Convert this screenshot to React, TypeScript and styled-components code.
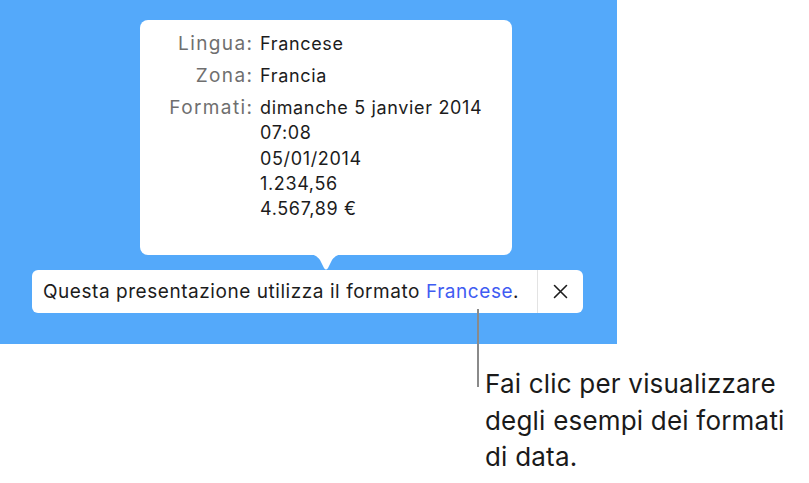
import React from "react";
import styled, { createGlobalStyle } from "styled-components";

const GlobalStyle = createGlobalStyle`
  html, body {
    margin: 0;
    padding: 0;
    background: #ffffff;
  }
  body {
    font-family: Inter, "Noto Sans", "Liberation Sans", sans-serif;
    -webkit-font-smoothing: antialiased;
  }
`;

const Page = styled.div`
  width: 809px;
  height: 483px;
  overflow: hidden;
  position: relative;
`;

const BluePanel = styled.div`
  width: 617px;
  height: 344px;
  box-sizing: border-box;
  background: #54a9fa;
  padding-top: 20px;
  display: flex;
  flex-direction: column;
`;

const Popover = styled.div`
  position: relative;
  margin-left: 140px;
  width: 372px;
  height: 235px;
  box-sizing: border-box;
  background: #ffffff;
  border-radius: 8px;
  padding: 11px 0 0 0;
`;

const Arrow = styled.svg`
  position: absolute;
  left: 166px;
  bottom: -16px;
  display: block;
`;

const InfoGrid = styled.div`
  display: grid;
  grid-template-columns: 112px 1fr;
  column-gap: 8px;
  row-gap: 6.5px;
  font-size: 18px;
  letter-spacing: 0.65px;
  line-height: 25.4px;
`;

const Label = styled.div`
  text-align: right;
  color: #6f6f6f;
  font-size: 19px;
  letter-spacing: 1.4px;
  margin-right: -1.4px;
`;

const Value = styled.div`
  color: #1c1c1c;
  display: flex;
  flex-direction: column;
`;

const Bar = styled.div`
  margin-top: 15px;
  margin-left: 32px;
  width: 551px;
  height: 43px;
  background: #ffffff;
  border-radius: 6px;
  display: flex;
  align-items: stretch;
`;

const Message = styled.div`
  flex: 1;
  display: flex;
  align-items: center;
  padding-left: 11px;
  font-size: 19px;
  letter-spacing: 0.55px;
  color: #1c1c1c;
  white-space: nowrap;
`;

const Link = styled.span`
  color: #3f5cf2;
`;

const Close = styled.div`
  width: 45px;
  border-left: 1px solid #e3e3e3;
  display: flex;
  align-items: center;
  justify-content: center;
  color: #1c1c1c;
`;

const Callout = styled.div`
  position: relative;
  margin-left: 485px;
  margin-top: 22px;
  font-size: 26px;
  letter-spacing: 0.2px;
  line-height: 36.5px;
  color: #1a1a1a;
`;

const Leader = styled.div`
  position: absolute;
  left: -8px;
  top: -57px;
  width: 2px;
  height: 78px;
  background: #8a8a8a;
`;

const formats = [
  "dimanche 5 janvier 2014",
  "07:08",
  "05/01/2014",
  "1.234,56",
  "4.567,89 €",
];

export default function App() {
  return (
    <Page>
      <GlobalStyle />
      <BluePanel>
        <Popover>
          <InfoGrid>
            <Label>Lingua:</Label>
            <Value>Francese</Value>
            <Label>Zona:</Label>
            <Value>Francia</Value>
            <Label>Formati:</Label>
            <Value>
              {formats.map((f) => (
                <span key={f}>{f}</span>
              ))}
            </Value>
          </InfoGrid>
          <Arrow width="40" height="17" viewBox="0 0 40 17">
            <path
              d="M0 0 C8 0 11 2 14 6 L18 14 Q20 17 22 14 L26 6 C29 2 32 0 40 0 Z"
              fill="#ffffff"
            />
          </Arrow>
        </Popover>
        <Bar>
          <Message>
            Questa presentazione utilizza il formato&nbsp;<Link>Francese</Link>.
          </Message>
          <Close>
            <svg width="15" height="15" viewBox="0 0 15 15">
              <path
                d="M1.5 1.5 L13.5 13.5 M13.5 1.5 L1.5 13.5"
                stroke="#1c1c1c"
                strokeWidth="1.6"
                strokeLinecap="round"
              />
            </svg>
          </Close>
        </Bar>
      </BluePanel>
      <Callout>
        <Leader />
        Fai clic per visualizzare
        <br />
        degli esempi dei formati
        <br />
        di data.
      </Callout>
    </Page>
  );
}
